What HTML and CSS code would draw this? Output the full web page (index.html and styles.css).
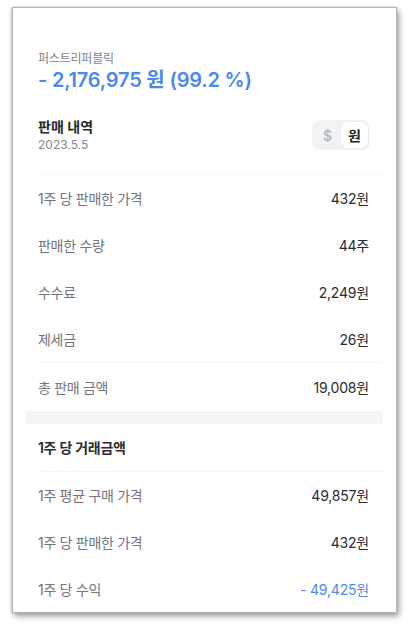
FILE: index.html
```html
<!DOCTYPE html>
<html lang="ko">
<head>
<meta charset="utf-8">
<link rel="stylesheet" href="styles.css">
</head>
<body>
<div class="card">
  <div class="summary">
    <div class="name">퍼스트리퍼블릭</div>
    <div class="total">- 2,176,975 원 (99.2 %)</div>
  </div>
  <div class="head">
    <div class="head-text">
      <div class="head-title">판매 내역</div>
      <div class="head-date">2023.5.5</div>
    </div>
    <div class="toggle">
      <span class="opt">$</span>
      <span class="opt active">원</span>
    </div>
  </div>
  <div class="divider"></div>
  <div class="row"><span class="label">1주 당 판매한 가격</span><span class="value">432원</span></div>
  <div class="row"><span class="label">판매한 수량</span><span class="value">44주</span></div>
  <div class="row"><span class="label">수수료</span><span class="value">2,249원</span></div>
  <div class="row"><span class="label">제세금</span><span class="value">26원</span></div>
  <div class="divider"></div>
  <div class="row"><span class="label">총 판매 금액</span><span class="value">19,008원</span></div>
  <div class="band"></div>
  <div class="section-title">1주 당 거래금액</div>
  <div class="divider"></div>
  <div class="row"><span class="label">1주 평균 구매 가격</span><span class="value">49,857원</span></div>
  <div class="row"><span class="label">1주 당 판매한 가격</span><span class="value">432원</span></div>
  <div class="row"><span class="label">1주 당 수익</span><span class="value blue">- 49,425원</span></div>
</div>
</body>
</html>
```
FILE: styles.css
```css
* { box-sizing: border-box; }
html, body { margin: 0; padding: 0; background: #ffffff; }
body {
  font-family: Inter, "Noto Sans CJK KR", sans-serif;
  width: 409px;
  height: 628px;
  padding: 7px 12px 0 12px;
}
.card {
  width: 385px;
  height: 606px;
  background: #fff;
  border: 1px solid #b3b3b3;
  box-shadow: 2px 3px 6px rgba(0,0,0,0.4), -1px 0 2px rgba(0,0,0,0.15);
  padding: 0 13px;
  display: flex;
  flex-direction: column;
}
.summary {
  padding: 43px 0 0 12px;
}
.name {
  font-size: 12px;
  line-height: 16px;
  color: #80838a;
  letter-spacing: -0.2px;
}
.total {
  font-size: 20px;
  line-height: 26px;
  font-weight: 600;
  color: #4c87ee;
  letter-spacing: -0.2px;
}
.head {
  margin-top: 24px;
  padding: 0 13px 0 12px;
  display: flex;
  align-items: center;
  justify-content: space-between;
  margin-bottom: 21px;
}
.head-title {
  font-size: 14px;
  line-height: 20px;
  font-weight: 600;
  color: #26282c;
}
.head-date {
  font-size: 12px;
  line-height: 16px;
  color: #85888f;
}
.toggle {
  display: flex;
  align-items: center;
  background: #f1f2f5;
  border-radius: 8px;
  padding: 2px;
  height: 30px;
  width: 58px;
}
.opt {
  flex: 1;
  height: 26px;
  display: flex;
  align-items: center;
  justify-content: center;
  font-size: 14px;
  font-weight: 600;
  color: #b3b7be;
  border-radius: 7px;
}
.opt.active {
  background: #fff;
  color: #1f2125;
  box-shadow: 0 0 2px rgba(0,0,0,0.08);
}
.divider {
  margin-left: 12px;
  border-top: 1px solid #f5f6f8;
  height: 0;
}
.row {
  height: 47px;
  padding: 0 14px 0 12px;
  display: flex;
  align-items: center;
  justify-content: space-between;
  font-size: 14px;
}
.label {
  color: #72757c;
  letter-spacing: -0.3px;
}
.value {
  color: #2a2c30;
  letter-spacing: -0.2px;
}
.value.blue { color: #4f89f0; }
.band {
  height: 13px;
  margin-top: 1px;
  background: #f4f5f7;
}
.section-title {
  height: 47px;
  padding-left: 12px;
  display: flex;
  align-items: center;
  font-size: 14px;
  font-weight: 600;
  color: #2a2c30;
  letter-spacing: -0.3px;
}
```
